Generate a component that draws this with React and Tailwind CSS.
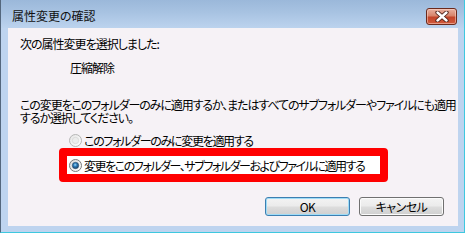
import React from "react";

const jp = "font-['Noto_Sans_CJK_JP','Noto_Sans',sans-serif] [font-feature-settings:'palt']";

function Radio({ checked }) {
  return (
    <svg width="13" height="13" viewBox="0 0 13 13" className="shrink-0">
      <defs>
        <linearGradient id={checked ? "rbg1" : "rbg0"} x1="0" y1="0" x2="1" y2="1">
          <stop offset="0" stopColor={checked ? "#d8d8d8" : "#e4e4e4"} />
          <stop offset="1" stopColor="#ffffff" />
        </linearGradient>
        <radialGradient id="dot" cx="0.45" cy="0.4" r="0.6">
          <stop offset="0" stopColor="#9fdcfb" />
          <stop offset="0.45" stopColor="#2a79b8" />
          <stop offset="1" stopColor="#183e62" />
        </radialGradient>
      </defs>
      <circle cx="6.5" cy="6.5" r="6" fill={checked ? "url(#rbg1)" : "url(#rbg0)"} stroke={checked ? "#7a7a7a" : "#b5b5b5"} strokeWidth="1" />
      {checked ? (
        <circle cx="6.5" cy="6.5" r="3.2" fill="url(#dot)" stroke="#2c4f70" strokeWidth="0.6" />
      ) : (
        <circle cx="6.5" cy="6.5" r="3.2" fill="#ececec" stroke="#d0d0d0" strokeWidth="0.6" />
      )}
    </svg>
  );
}

function Btn({ children, primary }) {
  return (
    <div
      className={
        "w-[85px] h-[19px] rounded-[3px] border flex items-center justify-center text-[12px] leading-[16px] text-black tracking-[-0.5px] " +
        (primary
          ? "border-[#3c7fb1] shadow-[inset_0_0_0_1px_#9fdcf7] "
          : "border-[#707070] shadow-[inset_0_0_0_1px_#fbfbfb] ") +
        "bg-[linear-gradient(to_bottom,#f3f3f3_0%,#ebebeb_48%,#dddddd_52%,#cfcfcf_100%)]"
      }
    >
      {children}
    </div>
  );
}

export default function App() {
  return (
    <div className={"w-[465px] h-[233px] flex flex-col bg-[#bed4ef] border-l border-l-[#54677d] border-r border-r-[#3ec8df] border-b border-b-[#3ec8df] " + jp}>
      <div className="h-[28px] shrink-0 flex items-start justify-between pl-[11px] pr-[7px] bg-[linear-gradient(to_bottom,#9bb8da_0%,#a8c3e2_45%,#bcd3ee_100%)]">
        <div className="mt-[8px] text-[12px] leading-[16px] text-[#111]">属性変更の確認</div>
        <div className="mt-[8px] w-[31px] h-[17px] rounded-[3px] border border-[#6b2a1c] bg-[linear-gradient(to_bottom,#e8b1a0_0%,#d7846b_45%,#c3452a_55%,#d05a3c_100%)] shadow-[inset_0_0_0_1px_rgba(255,220,210,0.5)] flex items-center justify-center">
          <svg width="14" height="11" viewBox="0 0 14 11">
            <path d="M2.5 1.5 L11.5 9.5 M11.5 1.5 L2.5 9.5" stroke="#4a1f17" strokeWidth="4.2" strokeLinecap="round" />
            <path d="M2.5 1.5 L11.5 9.5 M11.5 1.5 L2.5 9.5" stroke="#ffffff" strokeWidth="2.4" strokeLinecap="round" />
          </svg>
        </div>
      </div>
      <div className="flex-1 ml-[7px] mr-[6px] mb-[6px] bg-[#f6f2f6] flex flex-col pl-[12px] pr-[14px] pt-[8px] pb-[10px] text-black tracking-[-1px]">
        <div className="text-[12px] leading-[16px]">次の属性変更を選択しました:</div>
        <div className="mt-[8px] pl-[50px] text-[12px] leading-[16px]">圧縮解除</div>
        <div className="mt-[22px] text-[12px] leading-[13px] whitespace-nowrap tracking-[-1.1px]">
          この変更をこのフォルダーのみに適用するか、またはすべてのサブフォルダーやファイルにも適用
          <br />
          するか選択してください。
        </div>
        <div className="mt-[9px] ml-[39px] flex flex-col items-start tracking-[-1.3px]">
          <div className="h-[15px] pl-[10px] flex items-center gap-[2px] text-[12px] leading-[15px] whitespace-nowrap">
            <Radio checked={false} />
            <span>このフォルダーのみに変更を適用する</span>
          </div>
          <div className="w-[329px] h-[34px] border-[8px] border-[#ff0000] rounded-[4px] bg-white pl-[2px] flex items-center gap-[2px] text-[12px] leading-[15px] whitespace-nowrap tracking-[-1.45px]">
            <Radio checked={true} />
            <span>変更をこのフォルダー、サブフォルダーおよびファイルに適用する</span>
          </div>
        </div>
        <div className="mt-auto flex justify-end gap-[9px]">
          <Btn primary>OK</Btn>
          <Btn>キャンセル</Btn>
        </div>
      </div>
    </div>
  );
}
